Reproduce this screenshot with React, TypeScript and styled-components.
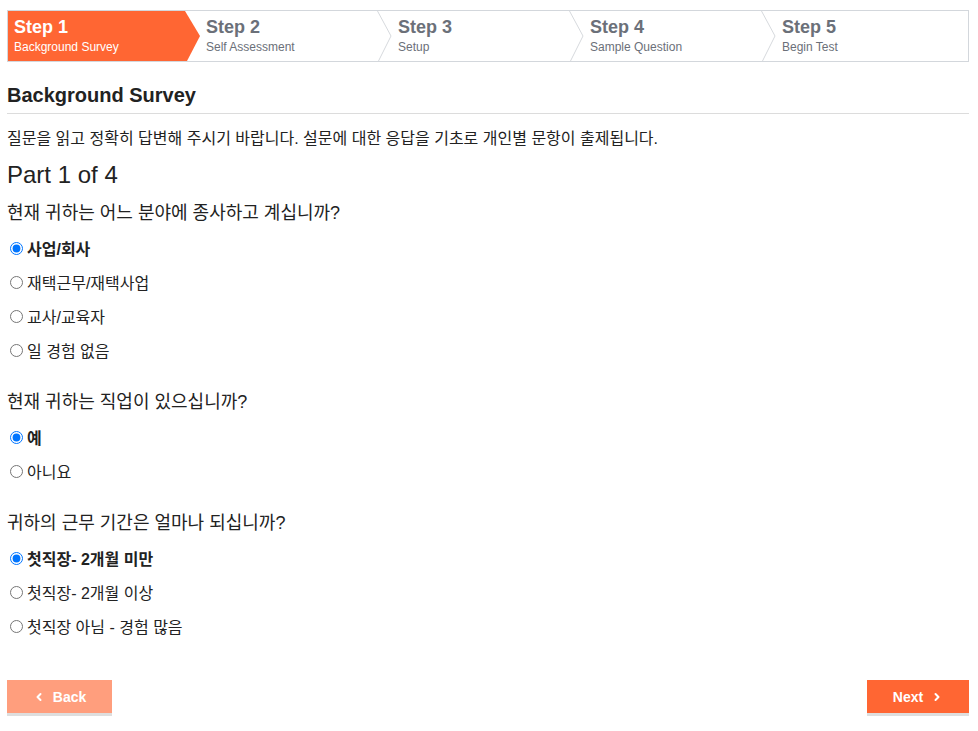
import React, { useState } from "react";
import styled, { createGlobalStyle } from "styled-components";
import { ChevronLeft, ChevronRight } from "lucide-react";

const GlobalStyle = createGlobalStyle`
  body {
    margin: 0;
    background: #fff;
    color: #222;
    font-family: "Liberation Sans", "Noto Sans CJK KR", Arial, sans-serif;
  }
`;

const ORANGE = "#ff6633";

const Page = styled.div`
  padding: 10px 9px 20px 7px;
`;

const Stepper = styled.ol`
  display: flex;
  margin: 0;
  padding: 0;
  list-style: none;
  height: 52px;
  box-sizing: border-box;
  border: 1px solid #d3d7dc;
`;

const Step = styled.li<{ $active?: boolean }>`
  position: relative;
  flex: 1;
  padding: 6px 0 0 6px;
  background: ${p => (p.$active ? ORANGE : "transparent")};
  clip-path: ${p =>
    p.$active
      ? "polygon(0 0, calc(100% - 15px) 0, 100% 50%, calc(100% - 13px) 100%, 0 100%)"
      : "none"};
  color: ${p => (p.$active ? "#fff" : "#6b7079")};
`;

const StepTitle = styled.div`
  font-size: 18px;
  line-height: 20px;
  font-weight: 700;
`;

const StepLabel = styled.div`
  margin-top: 2px;
  font-size: 12px;
  line-height: 16px;
`;

const Separator = styled.svg`
  position: absolute;
  top: 0;
  right: 0;
  width: 16px;
  height: 100%;
`;

const Heading = styled.h2`
  margin: 21px 0 0;
  padding-bottom: 6px;
  border-bottom: 1px solid #dcdcdc;
  font-size: 20px;
  line-height: 24px;
  font-weight: 700;
  color: #222;
`;

const Intro = styled.p`
  margin: 15px 0 0;
  font-size: 16px;
  line-height: 20px;
`;

const PartTitle = styled.h3`
  margin: 11px 0 0;
  font-size: 24px;
  line-height: 30px;
  font-weight: 400;
`;

const Question = styled.section`
  & + & {
    margin-top: 23px;
  }
`;

const QuestionText = styled.div`
  margin-top: 11px;
  font-size: 18px;
  line-height: 24px;
`;

const Options = styled.div`
  margin-top: 6px;
  display: flex;
  flex-direction: column;
`;

const Option = styled.label<{ $selected?: boolean }>`
  display: flex;
  align-items: center;
  height: 34px;
  font-size: 16px;
  font-weight: ${p => (p.$selected ? 700 : 400)};
  cursor: pointer;
`;

const Radio = styled.input.attrs({ type: "radio" })`
  width: 13px;
  height: 13px;
  margin: 0 4px 0 3px;
`;

const Actions = styled.div`
  display: flex;
  justify-content: space-between;
  margin-top: 37px;
`;

const NavButton = styled.button<{ $variant: "back" | "next" }>`
  display: flex;
  align-items: center;
  justify-content: center;
  gap: 8px;
  height: 33px;
  width: ${p => (p.$variant === "back" ? "105px" : "102px")};
  border: 0;
  padding: 0;
  background: ${p => (p.$variant === "back" ? "#ff9e7d" : ORANGE)};
  box-shadow: 0 3px 0 #dedede;
  color: #fff;
  font-family: "Liberation Sans", Arial, sans-serif;
  font-size: 14px;
  font-weight: 700;
  cursor: pointer;
`;

const steps = [
  { title: "Step 1", label: "Background Survey" },
  { title: "Step 2", label: "Self Assessment" },
  { title: "Step 3", label: "Setup" },
  { title: "Step 4", label: "Sample Question" },
  { title: "Step 5", label: "Begin Test" },
];

const questions = [
  {
    id: "field",
    text: "현재 귀하는 어느 분야에 종사하고 계십니까?",
    options: ["사업/회사", "재택근무/재택사업", "교사/교육자", "일 경험 없음"],
  },
  {
    id: "job",
    text: "현재 귀하는 직업이 있으십니까?",
    options: ["예", "아니요"],
  },
  {
    id: "period",
    text: "귀하의 근무 기간은 얼마나 되십니까?",
    options: ["첫직장- 2개월 미만", "첫직장- 2개월 이상", "첫직장 아님 - 경험 많음"],
  },
];

const App: React.FC = () => {
  const [answers, setAnswers] = useState<Record<string, number>>({
    field: 0,
    job: 0,
    period: 0,
  });

  return (
    <Page>
      <GlobalStyle />
      <Stepper>
        {steps.map((s, i) => (
          <Step key={s.title} $active={i === 0}>
            <StepTitle>{s.title}</StepTitle>
            <StepLabel>{s.label}</StepLabel>
            {i > 0 && i < steps.length - 1 && (
              <Separator viewBox="0 0 16 50" preserveAspectRatio="none">
                <polyline points="1.5,0 15,25 2.5,50" fill="none" stroke="#d6d9dd" strokeWidth="1" />
              </Separator>
            )}
          </Step>
        ))}
      </Stepper>

      <Heading>Background Survey</Heading>
      <Intro>질문을 읽고 정확히 답변해 주시기 바랍니다. 설문에 대한 응답을 기초로 개인별 문항이 출제됩니다.</Intro>
      <PartTitle>Part 1 of 4</PartTitle>

      {questions.map(q => (
        <Question key={q.id}>
          <QuestionText>{q.text}</QuestionText>
          <Options>
            {q.options.map((o, i) => (
              <Option key={o} $selected={answers[q.id] === i}>
                <Radio
                  name={q.id}
                  checked={answers[q.id] === i}
                  onChange={() => setAnswers(a => ({ ...a, [q.id]: i }))}
                />
                {o}
              </Option>
            ))}
          </Options>
        </Question>
      ))}

      <Actions>
        <NavButton $variant="back">
          <ChevronLeft size={12} strokeWidth={4} />
          Back
        </NavButton>
        <NavButton $variant="next">
          Next
          <ChevronRight size={12} strokeWidth={4} />
        </NavButton>
      </Actions>
    </Page>
  );
};

export default App;
